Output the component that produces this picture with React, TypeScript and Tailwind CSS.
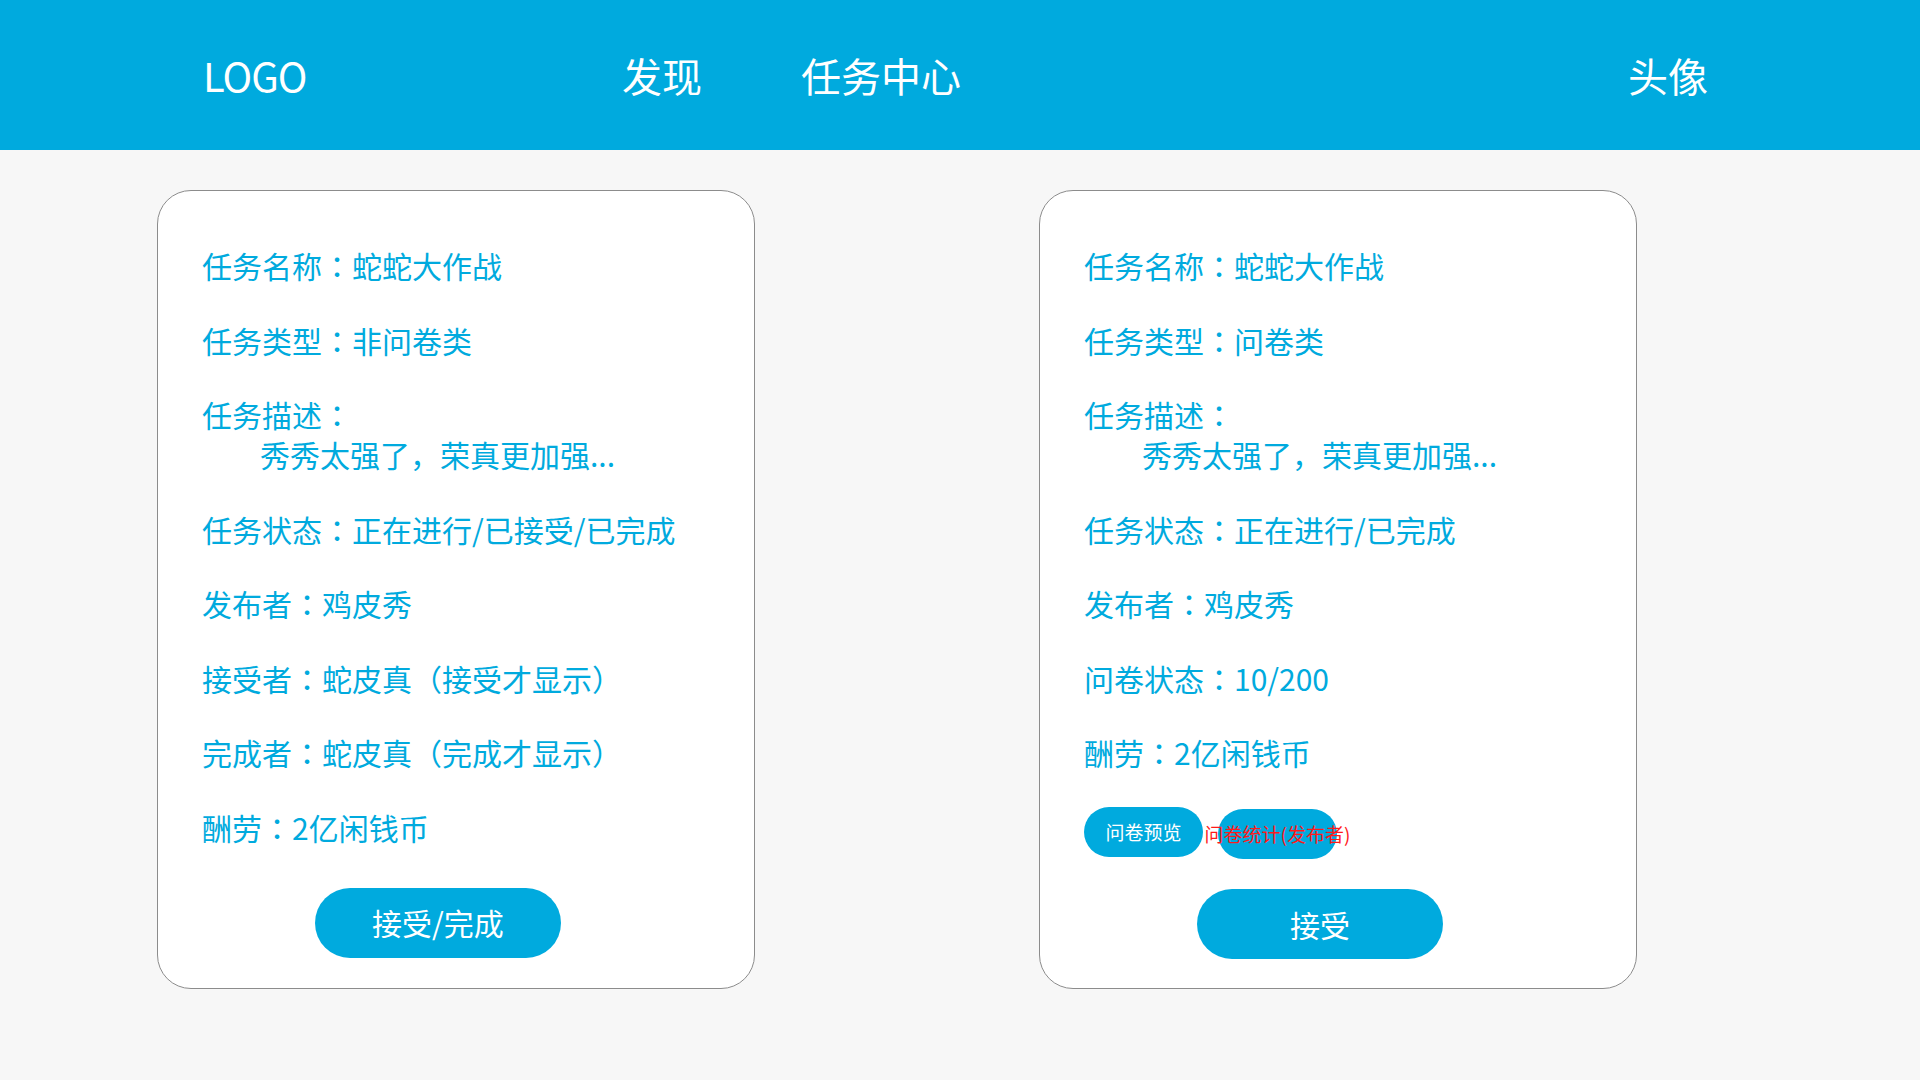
import React from "react";

const font = { fontFamily: '"Noto Sans CJK SC", "Noto Sans", sans-serif' };

// the reference draws the full-width colon centred in its box, as the TC face does
function Colon() {
  return <span style={{ fontFamily: '"Noto Sans CJK TC", sans-serif' }}>：</span>;
}

function Line({ label, value }: { label: string; value: string }) {
  return (
    <p className="text-[30px] leading-[40px] whitespace-nowrap">
      {label}
      <Colon />
      {value}
    </p>
  );
}

function Desc() {
  return (
    <div className="text-[30px] leading-[40px] whitespace-nowrap">
      <p>
        任务描述
        <Colon />
      </p>
      <p className="pl-[58px]">秀秀太强了，荣真更加强...</p>
    </div>
  );
}

function MainButton({ label }: { label: string }) {
  return (
    <div className="ml-[113px] flex h-[70px] w-[246px] items-center justify-center rounded-full bg-[#00aade] text-[30px] text-white">
      {label}
    </div>
  );
}

function TaskCard() {
  return (
    <div className="flex h-[799px] w-[598px] flex-col rounded-[34px] border border-[#8c8c8c] bg-white pl-[44px] pt-[54px] text-[#00aade]">
      <div className="flex flex-col gap-[34.5px]">
        <Line label="任务名称" value="蛇蛇大作战" />
        <Line label="任务类型" value="非问卷类" />
        <Desc />
        <Line label="任务状态" value="正在进行/已接受/已完成" />
        <Line label="发布者" value="鸡皮秀" />
        <Line label="接受者" value="蛇皮真（接受才显示）" />
        <Line label="完成者" value="蛇皮真（完成才显示）" />
        <Line label="酬劳" value="2亿闲钱币" />
      </div>
      <div className="mt-[41px]">
        <MainButton label="接受/完成" />
      </div>
    </div>
  );
}

function SurveyCard() {
  return (
    <div className="flex h-[799px] w-[598px] flex-col rounded-[34px] border border-[#8c8c8c] bg-white pl-[44px] pt-[54px] text-[#00aade]">
      <div className="flex flex-col gap-[34.5px]">
        <Line label="任务名称" value="蛇蛇大作战" />
        <Line label="任务类型" value="问卷类" />
        <Desc />
        <Line label="任务状态" value="正在进行/已完成" />
        <Line label="发布者" value="鸡皮秀" />
        <Line label="问卷状态" value="10/200" />
        <Line label="酬劳" value="2亿闲钱币" />
      </div>
      <div className="mt-[35px] flex items-start gap-[15px] text-[19px] leading-[24px]">
        <div className="flex h-[50px] w-[119px] items-center justify-center rounded-full bg-[#00aade] text-white whitespace-nowrap">
          问卷预览
        </div>
        <div className="mt-[2px] flex h-[50px] w-[119px] items-center justify-center rounded-full bg-[#00aade] text-[#ff1a1a] whitespace-nowrap">
          问卷统计(发布者)
        </div>
      </div>
      <div className="mt-[30px]">
        <MainButton label="接受" />
      </div>
    </div>
  );
}

export default function App() {
  return (
    <div className="min-h-screen w-full bg-[#f7f7f7]" style={font}>
      {/* top bar */}
      <header className="flex h-[150px] items-center bg-[#00aade] pl-[203px] text-[40px] leading-[50px] text-white">
        <span className="w-[419px] tracking-[-1px]">LOGO</span>
        <span>发现</span>
        <span className="ml-[99px]">任务中心</span>
        <span className="ml-[667px]">头像</span>
      </header>

      {/* cards */}
      <main className="flex gap-[284px] pl-[157px] pt-[40px]">
        <TaskCard />
        <SurveyCard />
      </main>
    </div>
  );
}
